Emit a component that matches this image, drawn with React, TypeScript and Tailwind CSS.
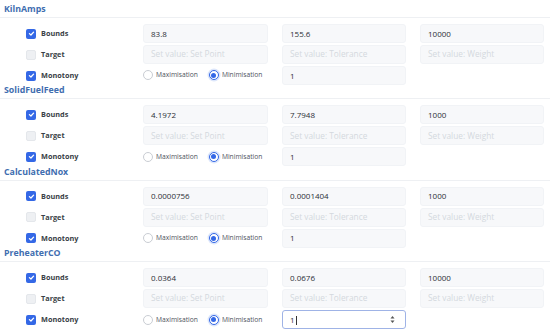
import { useState } from 'react';

type Variable = {
  name: string;
  lower: string;
  upper: string;
  weight: string;
  tolerance: string;
};

const variables: Variable[] = [
  { name: 'KilnAmps', lower: '83.8', upper: '155.6', weight: '10000', tolerance: '1' },
  { name: 'SolidFuelFeed', lower: '4.1972', upper: '7.7948', weight: '1000', tolerance: '1' },
  { name: 'CalculatedNox', lower: '0.0000756', upper: '0.0001404', weight: '1000', tolerance: '1' },
  { name: 'PreheaterCO', lower: '0.0364', upper: '0.0676', weight: '10000', tolerance: '1' },
];

function CheckBox({ checked }: { checked: boolean }) {
  return checked ? (
    <span className="w-[10px] h-[10px] rounded-[2px] bg-[#3468e6] flex items-center justify-center">
      <svg width="7" height="7" viewBox="0 0 10 10">
        <path d="M2 5.2 L4.2 7.2 L8 3" fill="none" stroke="white" strokeWidth="1.8" strokeLinecap="round" strokeLinejoin="round" />
      </svg>
    </span>
  ) : (
    <span className="w-[10px] h-[10px] rounded-[2px] bg-[#eef0f3] border border-[#e4e7eb]" />
  );
}

function Radio({ checked, label }: { checked: boolean; label: string }) {
  return (
    <span className="flex items-center gap-[2px]">
      {checked ? (
        <span className="w-[10px] h-[10px] rounded-full border border-[#3468e6] flex items-center justify-center bg-white shadow-[0_0_0_1.5px_#dce6fb]">
          <span className="w-[5px] h-[5px] rounded-full bg-[#3468e6]" />
        </span>
      ) : (
        <span className="w-[10px] h-[10px] rounded-full border border-[#c9cdd3] bg-white" />
      )}
      <span className="text-[6.7px] text-[#4d535d] pl-[1px]">{label}</span>
    </span>
  );
}

function Field({ value, placeholder, focused }: { value?: string; placeholder?: string; focused?: boolean }) {
  return (
    <div
      className={
        focused
          ? 'h-[19px] rounded-[3px] border border-[#9fb3e6] bg-white flex items-center pl-[7px] pr-[10px] justify-between'
          : 'h-[19px] rounded-[3px] border border-[#f1f3f6] bg-[#f7f8fa] flex items-center pl-[7px]'
      }
    >
      {value ? (
        <span className="text-[8px] text-[#2b2f36]">
          {value}
          {focused && <span className="inline-block w-px h-[9px] bg-[#333] align-middle ml-px" />}
        </span>
      ) : (
        <span className="text-[8.3px] text-[#d4d8de]">{placeholder}</span>
      )}
      {focused && (
        <svg width="5" height="9" viewBox="0 0 5 9">
          <path d="M0.5 3.5 L2.5 1 L4.5 3.5 Z" fill="#555" />
          <path d="M0.5 5.5 L2.5 8 L4.5 5.5 Z" fill="#555" />
        </svg>
      )}
    </div>
  );
}

function Label({ checked, text }: { checked: boolean; text: string }) {
  return (
    <div className="flex items-center gap-[5px] pl-[26px]">
      <CheckBox checked={checked} />
      <span className="text-[7.3px] font-bold text-[#3a3f47]">{text}</span>
    </div>
  );
}

function Section({ v, last }: { v: Variable; last: boolean }) {
  const [focused] = useState(last);
  return (
    <div className="h-[81.4px] pt-[2px]">
      <div className="h-[16px] border-b border-[#eef0f3] flex items-end pb-[1px] pl-[4px]">
        <span className="text-[8.8px] font-bold text-[#3f6eb0] leading-[14px]">{v.name}</span>
      </div>
      <div className="grid grid-cols-[129px_125px_124px_124px] gap-x-[14px] gap-y-[2px] pt-[6px] items-center">
        <Label checked text="Bounds" />
        <Field value={v.lower} />
        <Field value={v.upper} />
        <Field value={v.weight} />

        <Label checked={false} text="Target" />
        <Field placeholder="Set value: Set Point" />
        <Field placeholder="Set value: Tolerance" />
        <Field placeholder="Set value: Weight" />

        <Label checked text="Monotony" />
        <div className="flex items-center gap-[11px]">
          <Radio checked={false} label="Maximisation" />
          <Radio checked label="Minimisation" />
        </div>
        <Field value={v.tolerance} focused={focused} />
        <div />
      </div>
    </div>
  );
}

export default function App() {
  return (
    <div className="w-[550px] h-[334px] bg-white overflow-hidden font-['Open_Sans','Noto_Sans',sans-serif]">
      {variables.map((v, i) => (
        <Section key={v.name} v={v} last={i === variables.length - 1} />
      ))}
    </div>
  );
}
